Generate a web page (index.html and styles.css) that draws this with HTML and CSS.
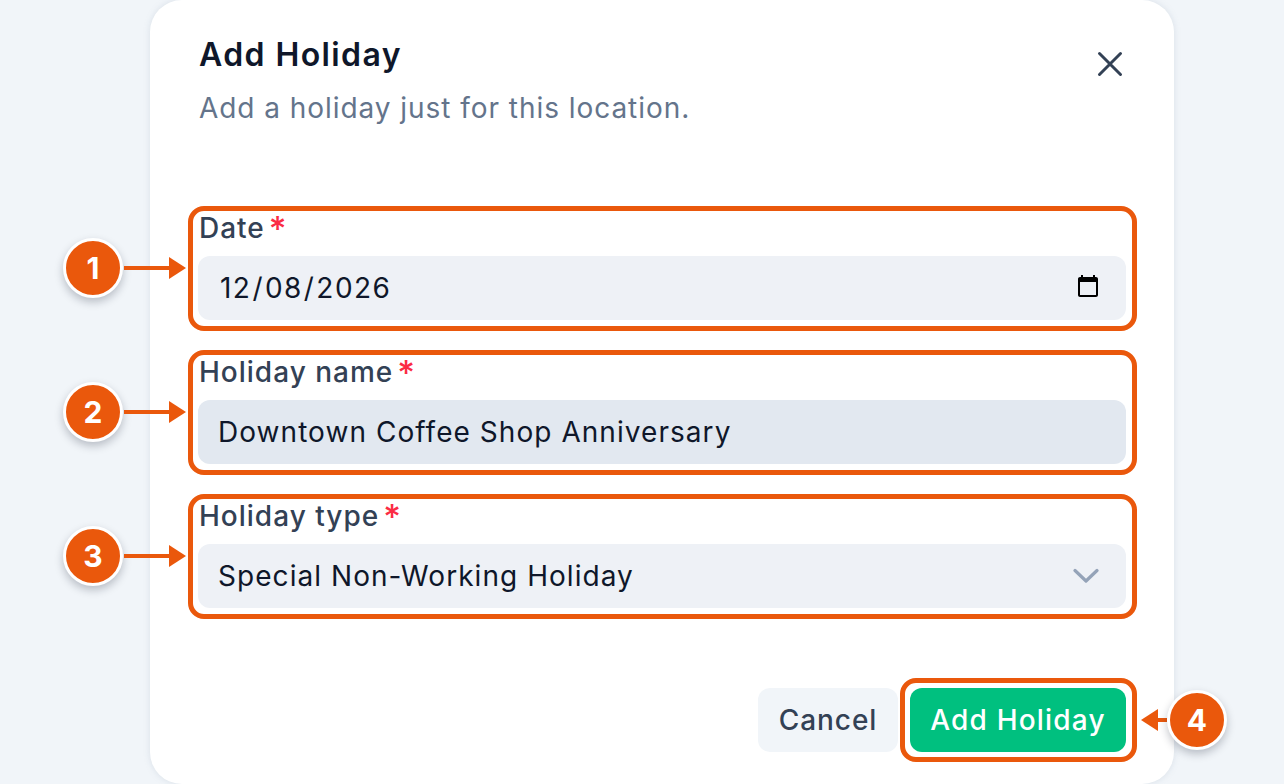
FILE: index.html
```html
<!DOCTYPE html>
<html lang="en">
<head>
  <meta charset="UTF-8" />
  <meta name="viewport" content="width=device-width, initial-scale=1.0"/>
  <title>Add Holiday</title>
  <link rel="stylesheet" href="styles.css">
</head>
<body>

<main class="modal">
  <header class="modal-header">
    <div>
      <h1>Add Holiday</h1>
      <p>Add a holiday just for this location.</p>
    </div>
    <button class="close-btn" aria-label="Close">
      <svg width="32" height="32" viewBox="0 0 32 32" fill="none" stroke="#334155" stroke-width="3" stroke-linecap="round"><path d="M5.500 5.500 26.500 26.500M26.500 5.500 5.500 26.500"/></svg>
    </button>
  </header>

  <form class="fields">
    <div class="field">
      <label for="holidayDate">Date<span class="req">*</span></label>
      <input class="control date-control" type="date" id="holidayDate" value="2026-12-08" />
      <span class="highlight"></span>
      <span class="pointer pointer-left"><b class="badge">1</b><i class="line"></i><i class="head-right"></i></span>
    </div>

    <div class="field">
      <label for="holidayName">Holiday name<span class="req">*</span></label>
      <input class="control focused" type="text" id="holidayName" value="Downtown Coffee Shop Anniversary" />
      <span class="highlight"></span>
      <span class="pointer pointer-left"><b class="badge">2</b><i class="line"></i><i class="head-right"></i></span>
    </div>

    <div class="field">
      <label for="holidayType">Holiday type<span class="req">*</span></label>
      <div class="select-wrap">
        <select class="control" id="holidayType">
          <option>Special Non-Working Holiday</option>
          <option>Regular Holiday</option>
        </select>
        <svg class="chevron" width="26" height="16" viewBox="0 0 26 16" fill="none" stroke="#94a3b8" stroke-width="3.200" stroke-linecap="round" stroke-linejoin="round"><path d="M2 2.500 13 13 24 2.500"/></svg>
      </div>
      <span class="highlight"></span>
      <span class="pointer pointer-left"><b class="badge">3</b><i class="line"></i><i class="head-right"></i></span>
    </div>
  </form>

  <footer class="modal-footer">
    <button class="btn btn-cancel" type="button">Cancel</button>
    <div class="primary-wrap">
      <button class="btn btn-primary" type="button">Add Holiday</button>
      <span class="highlight"></span>
      <span class="pointer pointer-right"><i class="head-left"></i><i class="line"></i><b class="badge">4</b></span>
    </div>
  </footer>
</main>

</body>
</html>
```

FILE: styles.css
```css
body {
  margin: 0;
  height: 784px;
  overflow: hidden;
  display: flex;
  justify-content: center;
  padding-left: 40px;
  box-sizing: border-box;
  background: #f1f5f9;
  font-family: Inter, "Noto Sans", sans-serif;
  color: #0f172a;
}
.modal {
  width: 1024px;
  height: 784px;
  box-sizing: border-box;
  padding: 36px 48px 32px 48px;
  background: #fff;
  border-radius: 32px;
  box-shadow: 0 0 6px rgba(148,163,184,0.25);
  display: flex;
  flex-direction: column;
}
.modal-header {
  display: flex;
  justify-content: space-between;
  align-items: flex-start;
}
.modal-header h1 {
  margin: 1px 0 0 1px;
  font-size: 32px;
  line-height: 36px;
  font-weight: 600;
  letter-spacing: 1.400px;
  color: #0f172a;
}
.modal-header p {
  margin: 21px 0 0 1px;
  font-size: 28px;
  line-height: 28px;
  letter-spacing: 0.950px;
  color: #64748b;
}
.close-btn {
  border: 0;
  background: none;
  padding: 0;
  margin: 12px 0 0 0;
  display: flex;
}
.fields {
  margin-top: 94px;
  display: flex;
  flex-direction: column;
  gap: 40px;
}
.field {
  position: relative;
  display: flex;
  flex-direction: column;
  gap: 16px;
}
.field label {
  margin-left: 1px;
  font-size: 28px;
  line-height: 24px;
  font-weight: 500;
  letter-spacing: 1px;
  color: #334155;
}
.req {
  position: relative;
  top: 3px;
  color: #fb2c45;
  margin-left: 4px;
  font-size: 34px;
  line-height: 0;
}
.control {
  width: 100%;
  height: 64px;
  box-sizing: border-box;
  border: 0;
  outline: 0;
  margin: 0;
  padding: 0 27px 0 20px;
  border-radius: 12px;
  background: #eef1f6;
  font-family: inherit;
  font-size: 28px;
  letter-spacing: 1.050px;
  color: #0f172a;
  appearance: none;
}
.control.focused {
  background: #e2e8f0;
}
.date-control {
  padding-left: 21px;
  padding-right: 25px;
  letter-spacing: 1.450px;
}
.date-control::-webkit-calendar-picker-indicator {
  width: 26px;
  height: 28px;
  padding: 0;
  margin: 0;
}
.select-wrap {
  position: relative;
  display: flex;
}
.chevron {
  position: absolute;
  right: 27px;
  top: 24px;
  pointer-events: none;
}
.highlight {
  position: absolute;
  inset: -10px -11px -11px -10px;
  border: 5px solid #ea580c;
  border-radius: 16px;
  pointer-events: none;
}
.primary-wrap .highlight {
  inset: -10px -11px -10px -10px;
}
.pointer {
  position: absolute;
  display: flex;
  align-items: center;
}
.pointer-left {
  right: 100%;
  top: 22px;
  margin-right: 12px;
}
.pointer-right {
  left: 100%;
  top: 50%;
  transform: translateY(-50%);
  margin-left: 15px;
}
.badge {
  width: 54px;
  height: 54px;
  box-sizing: content-box;
  border: 3px solid #fff;
  border-radius: 50%;
  background: #ea580c;
  color: #fff;
  font-size: 30px;
  font-weight: 700;
  display: flex;
  align-items: center;
  justify-content: center;
  box-shadow: 0 4px 8px rgba(15,23,42,0.25);
}
.line {
  width: 45px;
  height: 4.500px;
  margin-left: 1px;
  background: #ea580c;
}
.pointer-right .line {
  width: 9px;
  margin-left: 0;
}
.head-right {
  border-left: 17px solid #ea580c;
  border-top: 11.500px solid transparent;
  border-bottom: 11.500px solid transparent;
}
.head-left {
  border-right: 17px solid #ea580c;
  border-top: 11.500px solid transparent;
  border-bottom: 11.500px solid transparent;
}
.modal-footer {
  margin-top: auto;
  display: flex;
  justify-content: flex-end;
  gap: 12px;
}
.primary-wrap {
  position: relative;
  display: flex;
}
.btn {
  height: 64px;
  border: 0;
  border-radius: 12px;
  font-family: inherit;
  font-size: 28px;
  font-weight: 500;
}
.btn-cancel {
  width: 140px;
  background: #f1f5f9;
  color: #334155;
  letter-spacing: 0.950px;
}
.btn-primary {
  width: 216px;
  background: #00c07f;
  color: #fff;
  letter-spacing: 1.200px;
}
```
